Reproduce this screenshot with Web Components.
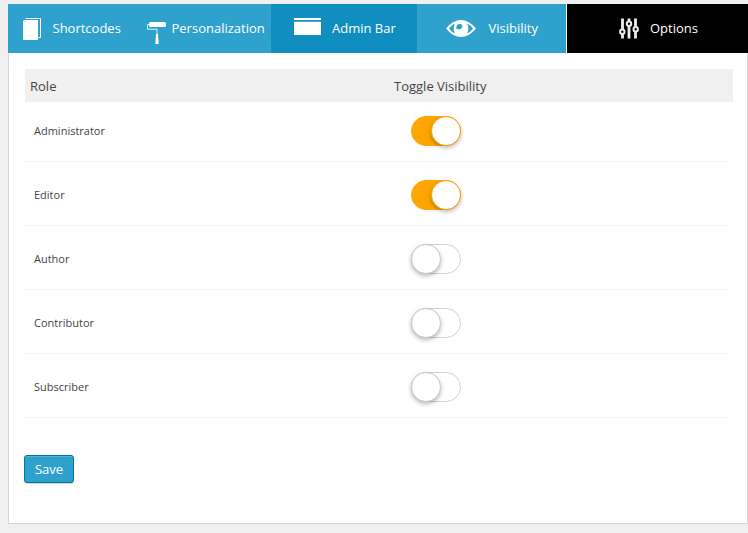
<!DOCTYPE html>
<html lang="en">
<head>
<meta charset="utf-8">
<title>Options</title>
<style>
body{margin:0;background:#f0f0f0;font-family:"Open Sans",sans-serif;color:#444;height:533px;overflow:hidden}
</style>
</head>
<body>
<settings-page></settings-page>
<script>
const icons = {
  pages: '<svg width="18" height="22" viewBox="0 0 18 22"><path d="M2.5 .5H17.5V19.5H15.5" fill="none" stroke="#fff" stroke-width="1"/><path d="M0 3L1 2H15V22H0Z" fill="#fff"/></svg>',
  roller: '<svg width="19" height="22" viewBox="0 0 19 22"><rect x="2" y="0" width="17" height="5" rx="1.5" fill="#fff"/><path d="M2.5 2.5H.5V7.2H10V12" fill="none" stroke="#fff" stroke-opacity=".85"/><path d="M9 12H11L11.7 22H8.3Z" fill="#fff"/></svg>',
  bar: '<svg width="27" height="17" viewBox="0 0 27 17"><path d="M0 0H27V2H0ZM0 4H27V17H0Z" fill="#fff"/><path d="M0 3H27V4H0Z" fill="#57b0d3"/></svg>',
  eye: '<svg width="30" height="17" viewBox="0 0 30 17"><path d="M0 8.5Q7 0 15 0T30 8.5Q23 17 15 17T0 8.5Z" fill="#fff"/><path d="M3 8.5Q5.5 5 9 3.4Q6.4 8.5 9 13.6Q5.5 12 3 8.5ZM27 8.5Q24.5 5 21 3.4Q23.6 8.5 21 13.6Q24.5 12 27 8.5Z" fill="#2ea2cc"/><path d="M13.2 4C15.5 3.5 16.7 5 16.2 7C15.6 9.2 12.6 10.2 10.4 8.8C9.8 6.4 11.1 4.5 13.2 4Z" fill="#2ea2cc"/></svg>',
  sliders: '<svg width="20" height="21" viewBox="0 0 20 21"><g fill="none" stroke="#eee" stroke-width="2.8"><path d="M3.5 .5V11M3.5 16V20.5M10 .5V3M10 8V20.5M16.5 .5V8.5M16.5 13.5V20.5"/></g><g fill="#000" stroke="#eee" stroke-width="2"><circle cx="3.3" cy="13.7" r="2.2"/><circle cx="10" cy="5.7" r="2.2"/><circle cx="16.7" cy="11.2" r="2.2"/></g></svg>'
};
class NavTab extends HTMLElement {
  connectedCallback() {
    const a = n => this.getAttribute(n);
    this.attachShadow({mode:'open'}).innerHTML = `<style>
:host{display:flex;box-sizing:border-box;width:${a('width')}px;height:49px;padding-left:${a('inset')}px;background:#2ea2cc;color:#fff;font-size:13px;line-height:49px;white-space:nowrap}
:host([active]){background:#0f8ebf}
:host([dark]){background:#000;margin-left:1px}
.icon{display:flex;align-items:flex-start;padding-top:${a('drop')}px;margin-right:${a('gap')}px}
svg{display:block}
</style><span class="icon">${icons[a('icon')]}</span><slot></slot>`;
  }
}
class ToggleSwitch extends HTMLElement {
  connectedCallback() {
    this.attachShadow({mode:'open'}).innerHTML = `<style>
:host{display:flex;box-sizing:border-box;width:50px;height:30px;border-radius:15px;border:1px solid #d2d2d2;background:#fff}
i{box-sizing:border-box;width:30px;height:30px;margin:-1px;border:1px solid #c9c9c9;border-radius:50%;background:#fff;box-shadow:0 2px 4px rgba(0,0,0,.28)}
:host([on]){background:#ffa500;border-color:#ffa500;justify-content:flex-end}
:host([on]) i{border-color:#ffa500}
</style><i></i>`;
  }
}
class RoleRow extends HTMLElement {
  connectedCallback() {
    this.attachShadow({mode:'open'}).innerHTML = `<style>
:host{display:grid;grid-template-columns:377px 50px;align-items:center;box-sizing:border-box;height:64px;padding:3px 0 0 9px;border-bottom:1px solid #f3f3f3;width:705px;font-size:11px}
:host(:first-of-type){margin-top:-4px}
.name{padding-bottom:2px}
</style><span class="name"><slot></slot></span><toggle-switch ${this.hasAttribute('on')?'on':''}></toggle-switch>`;
  }
}
class SaveButton extends HTMLElement {
  connectedCallback() {
    this.attachShadow({mode:'open'}).innerHTML = `<style>
:host{display:block}
button{display:block;box-sizing:border-box;width:50px;height:28px;padding:0;border:1px solid #0074a2;border-radius:3px;background:#2ea2cc;box-shadow:inset 0 1px 0 rgba(120,200,230,.5),0 1px 0 rgba(0,0,0,.15);color:#fff;font:13px/26px "Open Sans",sans-serif}
</style><button><slot></slot></button>`;
  }
}
class SettingsPage extends HTMLElement {
  connectedCallback() {
    this.attachShadow({mode:'open'}).innerHTML = `<style>
:host{display:block;width:740px;padding:4px 0 0 8px}
nav{display:flex;background:#fff}
main{box-sizing:border-box;height:471px;border:1px solid #d5d5d5;border-top:0;background:#fff;padding:16px 14px 0 16px}
header{display:grid;grid-template-columns:364px auto;height:33px;line-height:34px;padding-left:5px;background:#f0f0f0;font-size:13px}
save-button{margin:37px 0 0 -1px}
</style>
<nav>
<nav-tab width="125" icon="pages" inset="15" drop="14" gap="11.5">Shortcodes</nav-tab>
<nav-tab width="138" icon="roller" inset="14" drop="18" gap="5.5">Personalization</nav-tab>
<nav-tab active width="146" icon="bar" inset="23" drop="14" gap="11">Admin Bar</nav-tab>
<nav-tab width="149" icon="eye" inset="29" drop="16" gap="12.5">Visibility</nav-tab>
<nav-tab dark width="181" icon="sliders" inset="52" drop="14" gap="11">Options</nav-tab>
</nav>
<main>
<header><span>Role</span><span>Toggle Visibility</span></header>
<role-row on>Administrator</role-row>
<role-row on>Editor</role-row>
<role-row>Author</role-row>
<role-row>Contributor</role-row>
<role-row>Subscriber</role-row>
<save-button>Save</save-button>
</main>`;
  }
}
customElements.define('nav-tab', NavTab);
customElements.define('toggle-switch', ToggleSwitch);
customElements.define('role-row', RoleRow);
customElements.define('save-button', SaveButton);
customElements.define('settings-page', SettingsPage);
</script>
</body>
</html>
